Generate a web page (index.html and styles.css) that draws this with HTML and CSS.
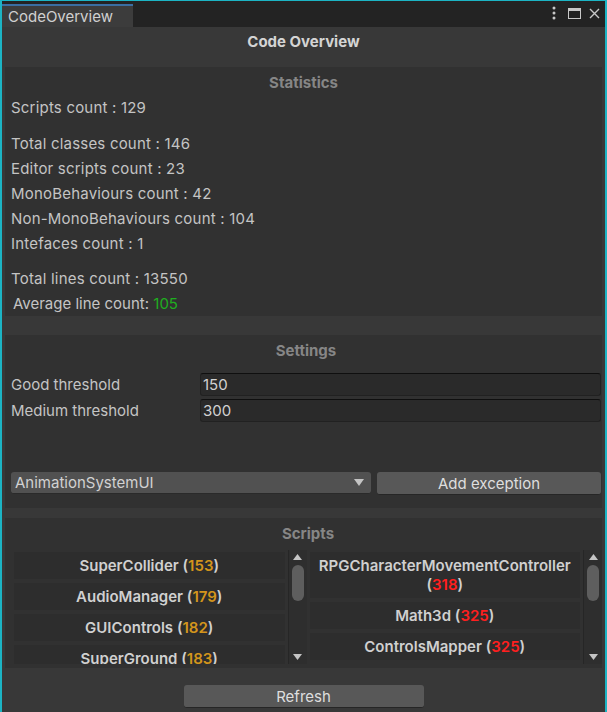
FILE: index.html
```html
<!DOCTYPE html>
<html lang="en">
<head>
<meta charset="utf-8">
<title>CodeOverview</title>
<link rel="stylesheet" href="styles.css">
</head>
<body>
<div class="window">
  <div class="tabbar">
    <div class="tab">CodeOverview</div>
    <div class="tab-icons">
      <svg class="ico" width="6" height="14" viewBox="0 0 6 14"><circle cx="3" cy="2" r="1.5" fill="#c8c8c8"/><circle cx="3" cy="7" r="1.5" fill="#c8c8c8"/><circle cx="3" cy="12" r="1.5" fill="#c8c8c8"/></svg>
      <svg class="ico" width="13" height="11" viewBox="0 0 13 11"><rect x="0.5" y="0.5" width="12" height="10" fill="none" stroke="#c8c8c8"/><rect x="0" y="0" width="13" height="3" fill="#c8c8c8"/></svg>
      <svg class="ico" width="11" height="11" viewBox="0 0 11 11"><path d="M1 1L10 10M10 1L1 10" stroke="#c8c8c8" stroke-width="1.4"/></svg>
    </div>
  </div>
  <div class="content">
    <div class="title">Code Overview</div>

    <section class="box stats">
      <div class="box-title">Statistics</div>
      <div class="group">
        <p>Scripts count : 129</p>
      </div>
      <div class="group gap">
        <p>Total classes count : 146</p>
        <p>Editor scripts count : 23</p>
        <p>MonoBehaviours count : 42</p>
        <p>Non-MonoBehaviours count : 104</p>
        <p>Intefaces count : 1</p>
      </div>
      <div class="group gap2">
        <p>Total lines count : 13550</p>
        <p class="avg">Average line count: <span class="good">105</span></p>
      </div>
    </section>

    <section class="box settings">
      <div class="box-title">Settings</div>
      <div class="fields">
        <label class="field-label">Good threshold</label>
        <div class="input">150</div>
        <label class="field-label">Medium threshold</label>
        <div class="input">300</div>
      </div>
      <div class="exception-row">
        <div class="dropdown"><span>AnimationSystemUI</span><svg width="10" height="7" viewBox="0 0 10 7"><path d="M0 0H10L5 7Z" fill="#c4c4c4"/></svg></div>
        <div class="button add">Add exception</div>
      </div>
    </section>

    <section class="box scripts">
      <div class="box-title">Scripts</div>
      <div class="lists">
        <div class="scrollview">
          <div class="items">
            <div class="item">SuperCollider (<span class="med">153</span>)</div>
            <div class="item">AudioManager (<span class="med">179</span>)</div>
            <div class="item">GUIControls (<span class="med">182</span>)</div>
            <div class="item">SuperGround (<span class="med">183</span>)</div>
          </div>
          <div class="scrollbar">
            <svg class="arrow" width="9" height="6" viewBox="0 0 9 6"><path d="M0 6H9L4.5 0Z" fill="#c4c4c4"/></svg>
            <div class="track"><div class="thumb"></div></div>
            <svg class="arrow" width="9" height="6" viewBox="0 0 9 6"><path d="M0 0H9L4.5 6Z" fill="#c4c4c4"/></svg>
          </div>
        </div>
        <div class="scrollview">
          <div class="items">
            <div class="item">RPGCharacterMovementController (<span class="bad">318</span>)</div>
            <div class="item">Math3d (<span class="bad">325</span>)</div>
            <div class="item">ControlsMapper (<span class="bad">325</span>)</div>
          </div>
          <div class="scrollbar">
            <svg class="arrow" width="9" height="6" viewBox="0 0 9 6"><path d="M0 6H9L4.5 0Z" fill="#c4c4c4"/></svg>
            <div class="track"><div class="thumb"></div></div>
            <svg class="arrow" width="9" height="6" viewBox="0 0 9 6"><path d="M0 0H9L4.5 6Z" fill="#c4c4c4"/></svg>
          </div>
        </div>
      </div>
    </section>

    <div class="footer">
      <div class="button refresh">Refresh</div>
    </div>
  </div>
</div>
</body>
</html>
```

FILE: styles.css
```css
* { box-sizing: border-box; }

html, body {
  margin: 0;
  padding: 0;
  background: #383838;
}

body {
  font-family: Inter, "Noto Sans", sans-serif;
  font-size: 15px;
  color: #c4c4c4;
}

.window {
  width: 607px;
  height: 712px;
  border-top: 1px solid #1cb4c4;
  border-left: 2px solid #1cb4c4;
  border-right: 2px solid #1cb4c4;
  background: #383838;
  overflow: hidden;
}

.tabbar {
  height: 26px;
  background: #232323;
  display: flex;
  justify-content: space-between;
  align-items: flex-end;
}

.tab {
  width: 131px;
  height: 23px;
  border-top: 2px solid #3a6ea3;
  background: #3c3c3c;
  padding-left: 6px;
  font-size: 15px;
  line-height: 21px;
  color: #d0d0d0;
}

.tab-icons {
  align-self: center;
  display: flex;
  align-items: center;
  padding-right: 5px;
  margin-top: -2px;
}

.tab-icons .ico { display: block; }
.tab-icons .ico:nth-child(1) { margin-right: 11px; }
.tab-icons .ico:nth-child(2) { margin-right: 8px; }

.title {
  height: 40px;
  padding-top: 5px;
  line-height: 20px;
  text-align: center;
  font-weight: 700;
  font-size: 15px;
  color: #d4d4d4;
}

.box {
  margin: 0 3px;
  background: #313131;
}

.box-title {
  padding-top: 4px;
  line-height: 24px;
  text-align: center;
  font-weight: 700;
  font-size: 15px;
  color: #868686;
}

.stats p {
  margin: 0;
  padding-left: 6px;
  line-height: 25px;
  letter-spacing: 0.2px;
}

.stats .gap { margin-top: 11px; }
.stats .gap2 { margin-top: 10px; }
.stats .avg { padding-left: 8px; letter-spacing: 0; }
.good { color: #1fae1f; }

.settings {
  margin-top: 19px;
  padding: 0 1px 13px 6px;
}

.fields {
  margin-top: 10px;
  display: grid;
  grid-template-columns: 189px 1fr;
  row-gap: 3px;
  align-items: center;
}

.field-label {
  line-height: 23px;
  color: #c4c4c4;
}

.input {
  height: 23px;
  background: #2a2a2a;
  border: 1px solid #212121;
  border-top-color: #0f0f0f;
  border-radius: 3px;
  padding-left: 2px;
  line-height: 21px;
  color: #d2d2d2;
}

.exception-row {
  margin-top: 50px;
  display: flex;
  gap: 6px;
  align-items: flex-start;
}

.dropdown {
  width: 360px;
  height: 22px;
  background: #515151;
  border-radius: 3px;
  border-bottom: 1px solid #2a2a2a;
  display: flex;
  align-items: center;
  justify-content: space-between;
  padding: 0 7px 0 4px;
  color: #d2d2d2;
  line-height: 20px;
}

.button {
  background: #585858;
  border-radius: 3px;
  border-bottom: 1px solid #262626;
  text-align: center;
  color: #dedede;
  line-height: 23px;
  height: 23px;
}

.add { flex: 1; }

.scripts {
  margin-top: 10px;
  padding: 0 0 4px 9px;
}

.lists {
  margin-top: 4px;
  display: grid;
  grid-template-columns: 1fr 1fr;
  column-gap: 3px;
  height: 114px;
}

.scrollview {
  display: grid;
  grid-template-columns: 1fr 19px;
  height: 114px;
  overflow: hidden;
}

.items {
  padding: 2px 3px 0 0;
  display: flex;
  flex-direction: column;
  gap: 4px;
  overflow: hidden;
}

.item {
  flex: none;
  background: #2d2d2d;
  padding: 4px 6px;
  line-height: 19px;
  text-align: center;
  font-weight: 600;
  font-size: 15px;
  color: #d0d0d0;
}

.med { color: #d3951c; }
.bad { color: #ff1f1f; }

.scrollbar {
  border-left: 1px solid #262626;
  background: #2e2e2e;
  display: flex;
  flex-direction: column;
  align-items: center;
  padding: 4px 0 4px;
}

.arrow { display: block; flex: none; }

.track {
  flex: 1;
  width: 100%;
  padding: 5px 0 0 3px;
}

.thumb {
  width: 12px;
  height: 36px;
  border-radius: 6px;
  background: #5e5e5e;
}

.footer {
  padding-top: 17px;
  display: flex;
  justify-content: center;
}

.refresh {
  width: 240px;
}
```
